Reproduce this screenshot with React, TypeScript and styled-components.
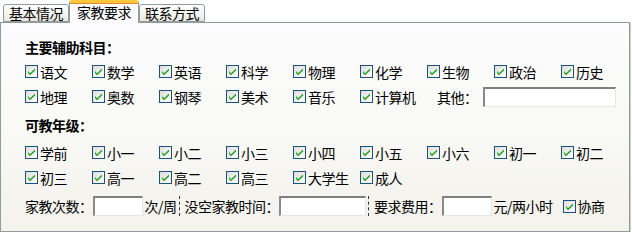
import React from 'react';
import styled, { createGlobalStyle } from 'styled-components';

// 颜色常量
const COLORS = {
  BORDER: '#919B9C',
  TEXT: '#000',
  CHECK_BORDER: '#1C5180',
  CHECK_MARK: '#21A121',
  TAB_ACTIVE_TOP: '#E68B2C',
  TAB_ACTIVE_TOP2: '#FFC73C',
};

const SUBJECTS_1 = ['语文', '数学', '英语', '科学', '物理', '化学', '生物', '政治', '历史'];
const SUBJECTS_2 = ['地理', '奥数', '钢琴', '美术', '音乐', '计算机'];
const GRADES_1 = ['学前', '小一', '小二', '小三', '小四', '小五', '小六', '初一', '初二'];
const GRADES_2 = ['初三', '高一', '高二', '高三', '大学生', '成人'];

const GlobalStyle = createGlobalStyle`
  html, body {
    margin: 0;
    padding: 0;
    background: #fff;
  }
  body {
    font-family: "Noto Sans CJK SC", "Liberation Sans", sans-serif;
    font-size: 14px;
    letter-spacing: -0.5px;
    color: ${COLORS.TEXT};
  }
`;

const Wrapper = styled.div`
  width: 630px;
`;

const TabStrip = styled.div`
  display: flex;
  align-items: flex-end;
  height: 22px;
  padding-left: 3px;
  position: relative;
  z-index: 2;
`;

const Tab = styled.div<{ $active?: boolean; $w: number }>`
  box-sizing: border-box;
  width: ${({ $w }) => $w}px;
  height: ${({ $active }) => ($active ? 23 : 18)}px;
  margin-bottom: ${({ $active }) => ($active ? -1 : 0)}px;
  border: 1px solid ${COLORS.BORDER};
  border-bottom: ${({ $active }) => ($active ? 'none' : `1px solid ${COLORS.BORDER}`)};
  border-top: ${({ $active }) => ($active ? `3px solid ${COLORS.TAB_ACTIVE_TOP2}` : `1px solid ${COLORS.BORDER}`)};
  border-radius: 3px 3px 0 0;
  background: ${({ $active }) =>
    $active ? '#FCFCFE' : 'linear-gradient(to bottom, #FFFFFF 0%, #F3F3EF 60%, #E8E7E0 100%)'};
  box-shadow: ${({ $active }) => ($active ? `inset 0 1px 0 ${COLORS.TAB_ACTIVE_TOP}` : 'none')};
  display: flex;
  align-items: center;
  justify-content: center;
  line-height: 16px;
  padding-bottom: ${({ $active }) => ($active ? 3 : 0)}px;
  white-space: nowrap;
`;

const Panel = styled.div`
  box-sizing: border-box;
  width: 630px;
  height: 210px;
  border: 1px solid ${COLORS.BORDER};
  background: linear-gradient(to bottom, #FCFCFE 0%, #F9F9F6 50%, #F3F2EC 100%);
  box-shadow: 1px 1px 0 #D0CEBF;
  padding: 14px 0 0 24px;
  display: flex;
  flex-direction: column;
`;

const SectionTitle = styled.div<{ $gap?: number; $after?: number }>`
  font-weight: 700;
  height: 20px;
  line-height: 20px;
  margin-top: ${({ $gap }) => $gap ?? 0}px;
  margin-bottom: ${({ $after }) => $after ?? 2}px;
`;

const CheckGrid = styled.div`
  display: grid;
  grid-template-columns: repeat(8, 67px) 73px;
  grid-auto-rows: 25px;
  align-items: center;
`;

const CheckItem = styled.label`
  display: flex;
  align-items: center;
  gap: 2px;
  white-space: nowrap;
  line-height: 16px;
`;

const OtherCell = styled.div`
  grid-column: 7 / span 3;
  display: flex;
  align-items: center;
  padding-left: 10px;
  gap: 5px;
`;

const TextBox = styled.div<{ $w: number }>`
  box-sizing: border-box;
  width: ${({ $w }) => $w}px;
  height: 20px;
  background: #fff;
  border-style: solid;
  border-width: 2px 1px 1px 2px;
  border-color: #7F7F7F #E6E6E6 #E6E6E6 #8A8A8A;
  flex: none;
`;

const BottomRow = styled.div`
  display: flex;
  align-items: center;
  height: 28px;
  margin-top: 2px;
  white-space: nowrap;
`;

const Sep = styled.span`
  display: inline-block;
  height: 20px;
  border-left: 1px dashed #333;
  margin: 0 5px 0 2px;
`;

const Gap = styled.span<{ $w: number }>`
  display: inline-block;
  width: ${({ $w }) => $w}px;
`;

const CheckBox: React.FC = () => (
  <svg width="13" height="13" viewBox="0 0 13 13" style={{ flex: 'none' }}>
    <defs>
      <linearGradient id="cbg" x1="0" y1="0" x2="1" y2="1">
        <stop offset="0" stopColor="#DCDCD7" />
        <stop offset="1" stopColor="#FFFFFF" />
      </linearGradient>
    </defs>
    <rect x="0.5" y="0.5" width="12" height="12" fill="url(#cbg)" stroke={COLORS.CHECK_BORDER} />
    <path d="M3 6 L5 8.2 L10 3.4 L10 5.4 L5 10.2 L3 8 Z" fill={COLORS.CHECK_MARK} />
  </svg>
);

const Check: React.FC<{ label: string }> = ({ label }) => (
  <CheckItem>
    <CheckBox />
    <span>{label}</span>
  </CheckItem>
);

export default function App() {
  return (
    <Wrapper>
      <GlobalStyle />
      <TabStrip>
        <Tab $w={66}>基本情况</Tab>
        <Tab $w={70} $active>家教要求</Tab>
        <Tab $w={66}>联系方式</Tab>
      </TabStrip>
      <Panel>
        <SectionTitle>主要辅助科目：</SectionTitle>
        <CheckGrid>
          {SUBJECTS_1.map((s) => <Check key={s} label={s} />)}
          {SUBJECTS_2.map((s) => <Check key={s} label={s} />)}
          <OtherCell>
            <span>其他：</span>
            <TextBox $w={133} />
          </OtherCell>
        </CheckGrid>
        <SectionTitle $gap={6} $after={5}>可教年级：</SectionTitle>
        <CheckGrid>
          {GRADES_1.map((s) => <Check key={s} label={s} />)}
          {GRADES_2.map((s) => <Check key={s} label={s} />)}
        </CheckGrid>
        <BottomRow>
          <span>家教次数：</span>
          <TextBox $w={50} />
          <Gap $w={2} />
          <span>次/周</span>
          <Sep />
          <span>没空家教时间：</span>
          <TextBox $w={87} />
          <Sep />
          <span>要求费用：</span>
          <TextBox $w={50} />
          <Gap $w={2} />
          <span>元/两小时</span>
          <Gap $w={10} />
          <Check label="协商" />
        </BottomRow>
      </Panel>
    </Wrapper>
  );
}
